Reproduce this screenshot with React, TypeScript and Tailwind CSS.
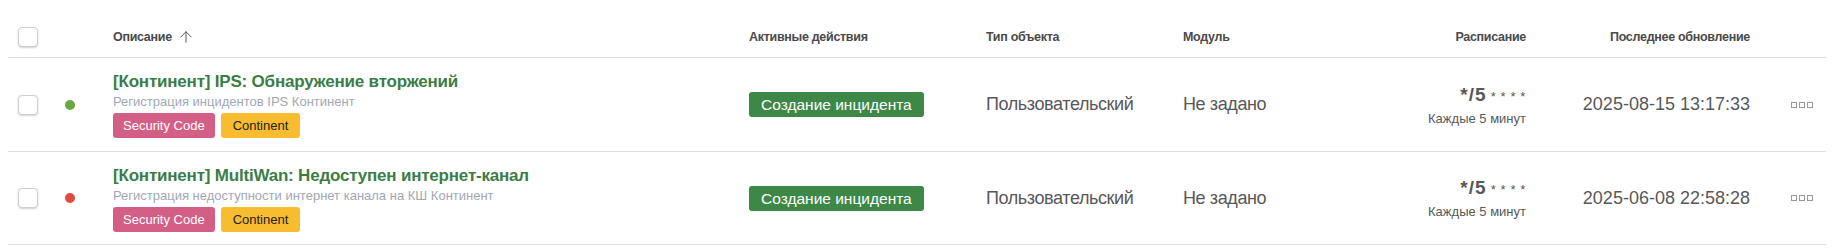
import React from "react";
import { ArrowUp } from "lucide-react";

const FONT = "font-['Liberation_Sans','Arial',sans-serif]";

function Checkbox() {
  return (
    <div className="w-5 h-5 rounded-[4px] border border-[#cfcfcf] bg-white shadow-[0_1px_2px_rgba(0,0,0,0.18)]" />
  );
}

function MenuDots() {
  return (
    <svg width="22" height="6" viewBox="0 0 22 6" className="block">
      <rect x="0.5" y="0.5" width="5" height="5" fill="none" stroke="#9a9a9a" strokeWidth="1" />
      <rect x="8.5" y="0.5" width="5" height="5" fill="none" stroke="#9a9a9a" strokeWidth="1" />
      <rect x="16.5" y="0.5" width="5" height="5" fill="none" stroke="#9a9a9a" strokeWidth="1" />
    </svg>
  );
}

type Row = {
  title: string;
  sub: string;
  dot: string;
  date: string;
  h: string;
};

const rows: Row[] = [
  {
    title: "[Континент] IPS: Обнаружение вторжений",
    sub: "Регистрация инцидентов IPS Континент",
    dot: "bg-[#67a843]",
    date: "2025-08-15 13:17:33",
    h: "h-[94px]",
  },
  {
    title: "[Континент] MultiWan: Недоступен интернет-канал",
    sub: "Регистрация недоступности интернет канала на КШ Континент",
    dot: "bg-[#e04a3f]",
    date: "2025-06-08 22:58:28",
    h: "h-[93px]",
  },
];

export default function App() {
  return (
    <div className={`w-[1847px] h-[252px] bg-white ${FONT}`}>
      <div className="ml-2 w-[1818px]">
        {/* Header */}
        <div className="flex items-center h-[58px] pt-[17px] border-b border-[#dddddd] text-[12.5px] tracking-[-0.3px] font-bold text-[#4a4a4a]">
          <div className="w-[42px] pl-[10px]">
            <Checkbox />
          </div>
          <div className="w-[63px]" />
          <div className="w-[636px] flex items-center gap-[5px]">
            <span>Описание</span>
            <ArrowUp size={18} strokeWidth={1.3} className="text-[#555]" />
          </div>
          <div className="w-[237px]">Активные действия</div>
          <div className="w-[197px]">Тип объекта</div>
          <div className="w-[217px]">Модуль</div>
          <div className="w-[126px] text-right">Расписание</div>
          <div className="w-[224px] text-right">Последнее обновление</div>
          <div className="w-[76px]" />
        </div>

        {rows.map((r) => (
          <div
            key={r.title}
            className={`flex items-center ${r.h} border-b border-[#dddddd]`}
          >
            <div className="w-[42px] pl-[10px]">
              <Checkbox />
            </div>
            <div className="w-[63px] pl-[15px]">
              <div className={`w-[10px] h-[10px] rounded-full ${r.dot}`} />
            </div>
            <div className="w-[636px] flex flex-col items-start">
              <div className="text-[17px] font-bold tracking-[-0.2px] leading-[22px] text-[#3b7d45]">
                {r.title}
              </div>
              <div className="text-[13px] leading-[18px] text-[#a2a7b4]">
                {r.sub}
              </div>
              <div className="flex gap-[6px] mt-[2px]">
                <span className="h-[25px] px-[10px] rounded-[3px] bg-[#d45f86] text-white text-[13px] leading-[25px]">
                  Security Code
                </span>
                <span className="h-[25px] px-[12px] rounded-[3px] bg-[#f7bc2f] text-[#222] text-[13px] leading-[25px]">
                  Continent
                </span>
              </div>
            </div>
            <div className="w-[237px]">
              <span className="inline-block h-[25px] px-[12px] rounded-[3px] bg-[#3d8747] text-white text-[15.5px] leading-[25px]">
                Создание инцидента
              </span>
            </div>
            <div className="w-[197px] text-[18px] tracking-[-0.4px] text-[#585858]">Пользовательский</div>
            <div className="w-[217px] text-[18px] tracking-[-0.4px] text-[#585858]">Не задано</div>
            <div className="w-[126px] flex flex-col items-end text-[#585858]">
              <div className="leading-[26px] whitespace-nowrap">
                <span className="text-[19px] font-bold tracking-[1px]">*/5</span>
                <span className="text-[13px] tracking-[0.6px]"> * * * *</span>
              </div>
              <div className="text-[13px] leading-[18px]">Каждые 5 минут</div>
            </div>
            <div className="w-[224px] text-right text-[18px] text-[#585858]">{r.date}</div>
            <div className="w-[76px] pl-[41px]">
              <MenuDots />
            </div>
          </div>
        ))}
      </div>
    </div>
  );
}
